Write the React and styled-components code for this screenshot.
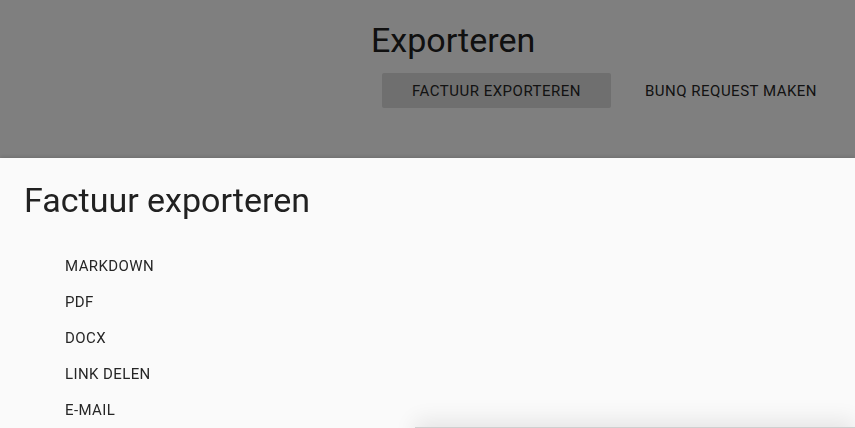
import React from "react";
import styled, { createGlobalStyle } from "styled-components";

const Global = createGlobalStyle`
  html, body { margin: 0; padding: 0; height: 100%; overflow: hidden; }
  body { font-family: Roboto, "Noto Sans", Arial, sans-serif; background: #fff; }
  #root { height: 100%; }
`;

const Page = styled.div`
  position: relative;
  height: 100vh;
  background: #ffffff;
  color: rgba(0, 0, 0, 0.87);
`;

const Header = styled.header`
  display: flex;
  flex-direction: column;
  align-items: flex-start;
  padding: 20px 0 0 371px;
`;

const PageTitle = styled.h1`
  margin: 0;
  font-size: 34px;
  line-height: 40px;
  font-weight: 400;
  color: #212121;
`;

const ButtonRow = styled.div`
  display: flex;
  gap: 18px;
  margin: 13px 0 0 11px;
`;

const FlatButton = styled.button`
  height: 35px;
  padding: 0 ${(p) => p.$pad}px;
  border: none;
  border-radius: 2px;
  background: ${(p) => (p.$active ? "#dedede" : "transparent")};
  font-family: Roboto, Arial, sans-serif;
  font-size: 15px;
  font-weight: 400;
  letter-spacing: 0.5px;
  text-transform: uppercase;
  color: #262626;
  cursor: pointer;
`;

const Overlay = styled.div`
  position: fixed;
  inset: 0;
  background: rgba(0, 0, 0, 0.5);
`;

const Sheet = styled.section`
  position: fixed;
  left: 0;
  right: 0;
  top: 158px;
  bottom: 0;
  background: #fafafa;
  box-shadow: 0 -1px 4px rgba(0, 0, 0, 0.15);
  padding: 22px 0 0 24px;
  overflow: hidden;
`;

const SheetTitle = styled.h2`
  margin: 0;
  font-size: 34px;
  line-height: 40px;
  font-weight: 400;
  color: #212121;
`;

const OptionList = styled.ul`
  list-style: none;
  margin: 28px 0 0;
  padding: 0 0 0 25px;
`;

const Option = styled.li`
  height: 36px;
  line-height: 36px;
  padding: 0 16px;
  font-size: 15px;
  font-weight: 400;
  letter-spacing: 0.4px;
  text-transform: uppercase;
  color: #262626;
  cursor: pointer;
`;

const NextCard = styled.div`
  margin: -1px 0 0 391px;
  height: 40px;
  background: #f5f5f5;
  border-top: 1px solid #cfcfcf;
  box-shadow: 0 -6px 22px rgba(0, 0, 0, 0.09);
`;

const options = ["Markdown", "PDF", "DOCX", "Link delen", "E-mail"];

export default function App() {
  return (
    <>
      <Global />
      <Page>
        <Header>
          <PageTitle>Exporteren</PageTitle>
          <ButtonRow>
            <FlatButton $active $pad={30}>Factuur exporteren</FlatButton>
            <FlatButton $pad={16}>bunq request maken</FlatButton>
          </ButtonRow>
        </Header>
        <Overlay />
        <Sheet>
          <SheetTitle>Factuur exporteren</SheetTitle>
          <OptionList>
            {options.map((o) => (
              <Option key={o}>{o}</Option>
            ))}
          </OptionList>
          <NextCard />
        </Sheet>
      </Page>
    </>
  );
}
